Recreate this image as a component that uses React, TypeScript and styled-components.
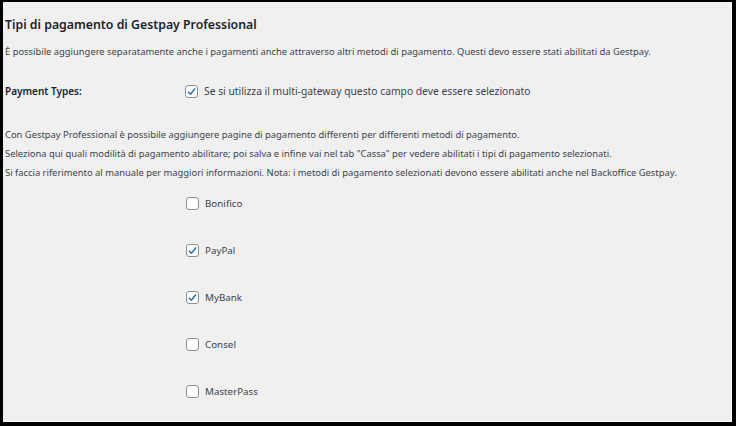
import React from "react";
import styled, { createGlobalStyle } from "styled-components";

const GlobalStyle = createGlobalStyle`
  html, body {
    margin: 0;
    padding: 0;
    background: #000;
  }
  * {
    box-sizing: border-box;
  }
`;

const Frame = styled.div`
  width: 736px;
  height: 426px;
  overflow: hidden;
  background: #f0f0f1;
  border-style: solid;
  border-color: #000;
  border-width: 2px 4px 4px 3px;
  box-shadow: inset -1px -1px 0 #fff;
  padding: 12px 0 0 2px;
  font-family: "Noto Sans", "Open Sans", sans-serif;
  font-size: 9.4px;
  color: #3c434a;
`;

const Title = styled.h2`
  margin: 0 0 6px;
  font-size: 12.3px;
  font-weight: 600;
  color: #1d2327;
  line-height: 22px;
`;

const Intro = styled.p`
  margin: 0;
  line-height: 19px;
`;

const FieldRow = styled.div`
  display: grid;
  grid-template-columns: 180px 1fr;
  align-items: center;
  margin-top: 19px;
  height: 22px;
`;

const FieldLabel = styled.div`
  font-size: 10px;
  font-weight: 600;
  color: #1d2327;
`;

const Description = styled.p`
  margin: 23px 0 0;
  line-height: 19px;
`;

const MethodList = styled.div`
  display: flex;
  flex-direction: column;
  gap: 25px;
  margin-top: 10px;
  padding-left: 181px;
`;

const CheckLine = styled.label<{ $size?: number }>`
  display: flex;
  align-items: center;
  gap: 6px;
  height: 22px;
  font-size: ${({ $size }) => $size || 9.8}px;
`;

const Box = styled.span<{ $checked?: boolean }>`
  width: 13px;
  height: 13px;
  flex: none;
  border: 1px solid #8c8f94;
  border-radius: 3px;
  background: #fff;
  display: flex;
  align-items: center;
  justify-content: center;
  svg {
    display: ${({ $checked }) => ($checked ? "block" : "none")};
  }
`;

const Check: React.FC<{ checked?: boolean }> = ({ checked }) => (
  <Box $checked={checked}>
    <svg width="11" height="11" viewBox="0 0 20 20">
      <path d="M3.5 10.5 L8 15 L16.5 4.5" fill="none" stroke="#2271b1" strokeWidth="2.6" strokeLinejoin="round" />
    </svg>
  </Box>
);

const methods = [
  { name: "Bonifico", checked: false },
  { name: "PayPal", checked: true },
  { name: "MyBank", checked: true },
  { name: "Consel", checked: false },
  { name: "MasterPass", checked: false },
];

export default function App() {
  return (
    <>
      <GlobalStyle />
      <Frame>
        <Title>Tipi di pagamento di Gestpay Professional</Title>
        <Intro>
          È possibile aggiungere separatamente anche i pagamenti anche attraverso altri metodi di pagamento. Questi devo essere stati abilitati da Gestpay.
        </Intro>
        <FieldRow>
          <FieldLabel>Payment Types:</FieldLabel>
          <CheckLine $size={10.3}>
            <Check checked />
            Se si utilizza il multi-gateway questo campo deve essere selezionato
          </CheckLine>
        </FieldRow>
        <Description>
          Con Gestpay Professional è possibile aggiungere pagine di pagamento differenti per differenti metodi di pagamento.
          <br />
          Seleziona qui quali modilità di pagamento abilitare; poi salva e infine vai nel tab "Cassa" per vedere abilitati i tipi di pagamento selezionati.
          <br />
          Si faccia riferimento al manuale per maggiori informazioni. Nota: i metodi di pagamento selezionati devono essere abilitati anche nel Backoffice Gestpay.
        </Description>
        <MethodList>
          {methods.map((m) => (
            <CheckLine key={m.name}>
              <Check checked={m.checked} />
              {m.name}
            </CheckLine>
          ))}
        </MethodList>
      </Frame>
    </>
  );
}
